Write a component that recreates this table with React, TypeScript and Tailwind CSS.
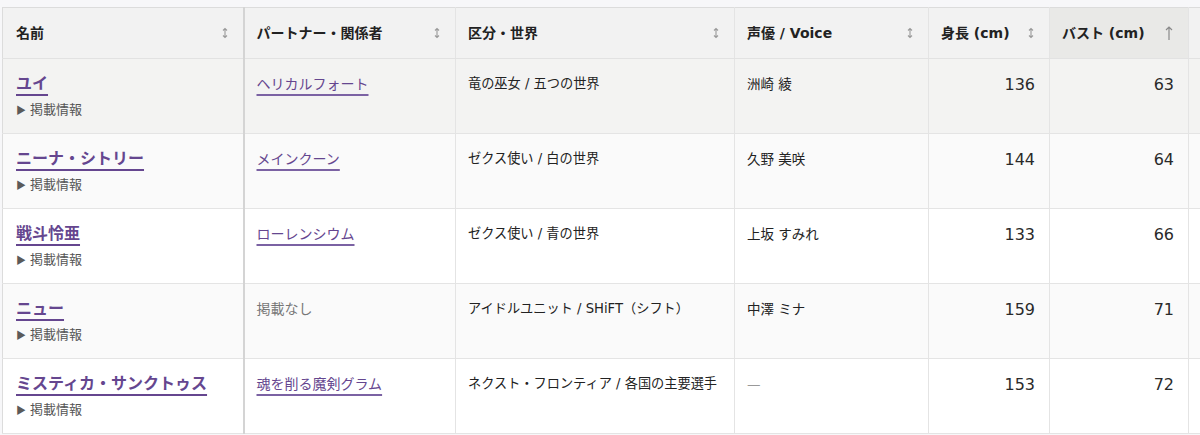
import React from 'react'

type Row = {
  name: string
  partner: string | null
  world: string
  voice: string
  height: number
  bust: number
}

const rows: Row[] = [
  { name: 'ユイ', partner: 'ヘリカルフォート', world: '竜の巫女 / 五つの世界', voice: '洲崎 綾', height: 136, bust: 63 },
  { name: 'ニーナ・シトリー', partner: 'メインクーン', world: 'ゼクス使い / 白の世界', voice: '久野 美咲', height: 144, bust: 64 },
  { name: '戦斗怜亜', partner: 'ローレンシウム', world: 'ゼクス使い / 青の世界', voice: '上坂 すみれ', height: 133, bust: 66 },
  { name: 'ニュー', partner: null, world: 'アイドルユニット / SHiFT（シフト）', voice: '中澤 ミナ', height: 159, bust: 71 },
  { name: 'ミスティカ・サンクトゥス', partner: '魂を削る魔剣グラム', world: 'ネクスト・フロンティア / 各国の主要選手', voice: '—', height: 153, bust: 72 },
]

const rowBg = ['bg-[#f3f3f2]', 'bg-[#fafafa]', 'bg-white', 'bg-[#fafafa]', 'bg-white']

function SortBoth() {
  return (
    <svg width="8" height="12" viewBox="0 0 8 12" className="shrink-0 text-[#9a9a9a]">
      <path d="M4 1.5v9M2 3.5l2-2 2 2M2 8.5l2 2 2-2" fill="none" stroke="currentColor" strokeWidth="1.1" />
    </svg>
  )
}

function SortUp() {
  return (
    <svg width="10" height="16" viewBox="0 0 10 16" className="shrink-0 text-[#8a8a8a]">
      <path d="M5 2v13M2 5l3-3 3 3" fill="none" stroke="currentColor" strokeWidth="1.2" />
    </svg>
  )
}

function Th({ label, sorted, sticky }: { label: string; sorted?: boolean; sticky?: boolean }) {
  return (
    <th
      className={`h-[51px] border-b border-[#e2e2e2] pl-[12px] pr-[14px] text-left align-middle text-[14px] font-bold text-[#222] ${
        sticky ? 'border-r-2 border-r-[#d4d4d4] !pl-[13px]' : 'border-r border-r-[#e4e4e4]'
      } ${sorted ? 'bg-[#e9e9e7]' : 'bg-[#f2f2f2]'}`}
    >
      <div className="flex items-center justify-between">
        <span>{label}</span>
        {sorted ? <SortUp /> : <SortBoth />}
      </div>
    </th>
  )
}

export default function App() {
  return (
    <main
      className="h-[435px] w-[1200px] overflow-hidden bg-[#f7f7f9] pl-[2px] pt-[7px]"
      style={{ fontFamily: '"DejaVu Sans", "Noto Sans CJK JP", sans-serif' }}
    >
      <table className="w-[1350px] table-fixed border-collapse border-l border-t border-[#dcdcdc] bg-white">
        <colgroup>
          <col className="w-[241px]" />
          <col className="w-[212px]" />
          <col className="w-[279px]" />
          <col className="w-[194px]" />
          <col className="w-[121px]" />
          <col className="w-[139px]" />
          <col className="w-[164px]" />
        </colgroup>
        <thead>
          <tr>
            <Th label="名前" sticky />
            <Th label="パートナー・関係者" />
            <Th label="区分・世界" />
            <Th label="声優 / Voice" />
            <Th label="身長 (cm)" />
            <Th label="バスト (cm)" sorted />
            <th className="border-b border-[#e2e2e2] bg-[#f2f2f2]" />
          </tr>
        </thead>
        <tbody>
          {rows.map((r, i) => (
            <tr key={r.name} className={`h-[75px] ${rowBg[i]}`}>
              <td className="border-b border-r-2 border-b-[#e4e4e4] border-r-[#d4d4d4] pl-[13px] pr-[14px] pt-[13px] align-top">
                <a
                  href="#"
                  className="text-[16px] font-bold leading-6 text-[#65468f] underline decoration-[#65468f] decoration-2 underline-offset-[5px]"
                >
                  {r.name}
                </a>
                <div className="mt-[4px] flex items-center gap-[4px] text-[13px] leading-5 text-[#555]">
                  <span className="font-['Noto_Sans_CJK_JP'] text-[10px] text-[#5a5a5a]">▶</span>
                  <span>掲載情報</span>
                </div>
              </td>
              <td className="border-b border-r border-[#e4e4e4] pl-[12px] pr-[14px] pt-[15px] align-top text-[14px] leading-5">
                {r.partner ? (
                  <a
                    href="#"
                    className="text-[#65468f] underline decoration-[#7b62a3] decoration-[1.5px] underline-offset-[5px]"
                  >
                    {r.partner}
                  </a>
                ) : (
                  <span className="text-[#777]">掲載なし</span>
                )}
              </td>
              <td className="border-b border-r border-[#e4e4e4] pl-[12px] pr-[4px] pt-[15px] align-top text-[13.2px] leading-5 text-[#222]">
                {r.world}
              </td>
              <td
                className={`border-b border-r border-[#e4e4e4] pl-[12px] pr-[14px] pt-[15px] align-top text-[13.5px] leading-5 ${
                  r.voice === '—' ? 'text-[#999]' : 'text-[#222]'
                }`}
              >
                {r.voice}
              </td>
              <td className="border-b border-r border-[#e4e4e4] px-[14px] pt-[16px] text-right align-top text-[16px] leading-5 text-[#2a2a2a]">
                {r.height}
              </td>
              <td className="border-b border-r border-[#e4e4e4] px-[14px] pt-[16px] text-right align-top text-[16px] leading-5 text-[#2a2a2a]">
                {r.bust}
              </td>
              <td className="border-b border-[#e4e4e4]" />
            </tr>
          ))}
        </tbody>
      </table>
    </main>
  )
}
